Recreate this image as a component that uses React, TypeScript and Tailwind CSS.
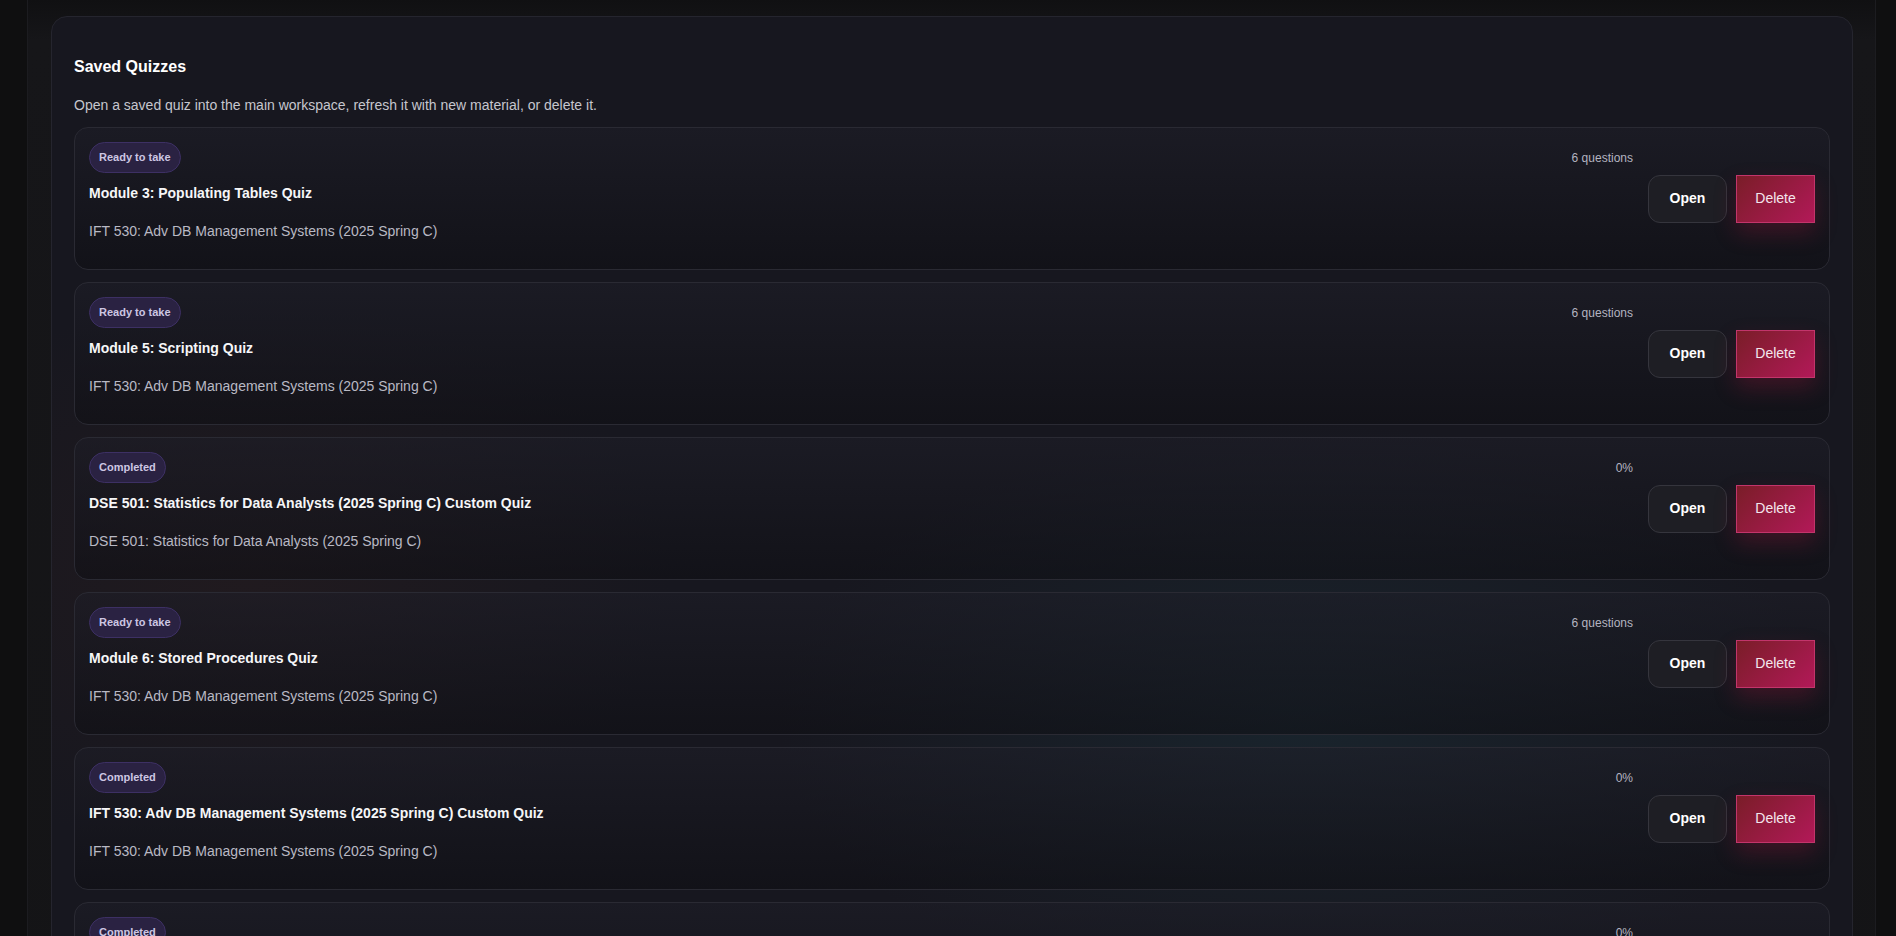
const quizzes = [
  {
    status: "Ready to take",
    title: "Module 3: Populating Tables Quiz",
    course: "IFT 530: Adv DB Management Systems (2025 Spring C)",
    meta: "6 questions",
  },
  {
    status: "Ready to take",
    title: "Module 5: Scripting Quiz",
    course: "IFT 530: Adv DB Management Systems (2025 Spring C)",
    meta: "6 questions",
  },
  {
    status: "Completed",
    title: "DSE 501: Statistics for Data Analysts (2025 Spring C) Custom Quiz",
    course: "DSE 501: Statistics for Data Analysts (2025 Spring C)",
    meta: "0%",
  },
  {
    status: "Ready to take",
    title: "Module 6: Stored Procedures Quiz",
    course: "IFT 530: Adv DB Management Systems (2025 Spring C)",
    meta: "6 questions",
  },
  {
    status: "Completed",
    title: "IFT 530: Adv DB Management Systems (2025 Spring C) Custom Quiz",
    course: "IFT 530: Adv DB Management Systems (2025 Spring C)",
    meta: "0%",
  },
  {
    status: "Completed",
    title: "DSE 501: Statistics for Data Analysts (2025 Spring C) Custom Quiz",
    course: "DSE 501: Statistics for Data Analysts (2025 Spring C)",
    meta: "0%",
  },
];

type Quiz = (typeof quizzes)[number];

const QuizRow = ({ quiz }: { quiz: Quiz }) => {
  return (
    <div className="flex items-center gap-[15px] rounded-[14px] border border-[#2a2a33] bg-[linear-gradient(180deg,rgba(30,30,40,0.55),rgba(14,14,19,0.55))] p-[14px]">
      <div className="flex-1 min-w-0 pb-[14px]">
        <div className="flex items-center justify-between">
          <span className="rounded-full border border-[#3d3064] bg-[#2a2242] px-[9px] py-[7px] text-[11px] font-bold leading-[15px] text-[#cdc6e2]">
            {quiz.status}
          </span>
          <span className="text-[12px] leading-4 text-[#b4b4c0]">{quiz.meta}</span>
        </div>
        <div className="mt-[10px] text-[14px] font-bold leading-5 text-[#f6f6f8]">
          {quiz.title}
        </div>
        <div className="mt-[18px] text-[14px] leading-5 text-[#b9b9c4]">{quiz.course}</div>
      </div>
      <div className="flex items-center gap-[9px]">
        <button className="h-12 w-[79px] rounded-xl border border-[#35353d] bg-[#1e1e24] text-[14px] font-bold text-white">
          Open
        </button>
        <button className="h-12 w-[79px] border border-[#c2356b] bg-[linear-gradient(135deg,#7a1d28,#b21958)] text-[14px] text-[#f3e6ec] shadow-[0_10px_22px_rgba(170,20,60,0.28)]">
          Delete
        </button>
      </div>
    </div>
  );
};

export default function App() {
  return (
    <div
      className="min-h-screen bg-[#0f0f10] pl-[27px] pr-[20px] pb-10"
      style={{ fontFamily: '"Liberation Sans", Arial, sans-serif' }}
    >
      <div className="bg-[linear-gradient(180deg,#101012_0px,#161619_40px,#141416_100%)] pl-[23px] pr-[22px] pt-4 pb-6 border-x border-[#1c1c20]">
        <div className="relative overflow-hidden rounded-2xl border border-[#25252e] bg-[#17171f] px-[22px] pt-[38px] pb-6">
          <div className="pointer-events-none absolute inset-0 bg-[radial-gradient(ellipse_750px_420px_at_1250px_700px,rgba(30,60,70,0.35),transparent_70%),radial-gradient(ellipse_600px_400px_at_200px_560px,rgba(60,35,30,0.25),transparent_70%)]" />
          <div className="relative">
            <h2 className="text-[16px] font-bold leading-6 text-white">Saved Quizzes</h2>
            <p className="mt-[16px] text-[14px] leading-5 text-[#c6c6ce]">
              Open a saved quiz into the main workspace, refresh it with new material, or delete it.
            </p>
            <div className="mt-3 flex flex-col gap-3">
              {quizzes.map((q, i) => (
                <QuizRow key={i} quiz={q} />
              ))}
            </div>
          </div>
        </div>
      </div>
    </div>
  );
}
